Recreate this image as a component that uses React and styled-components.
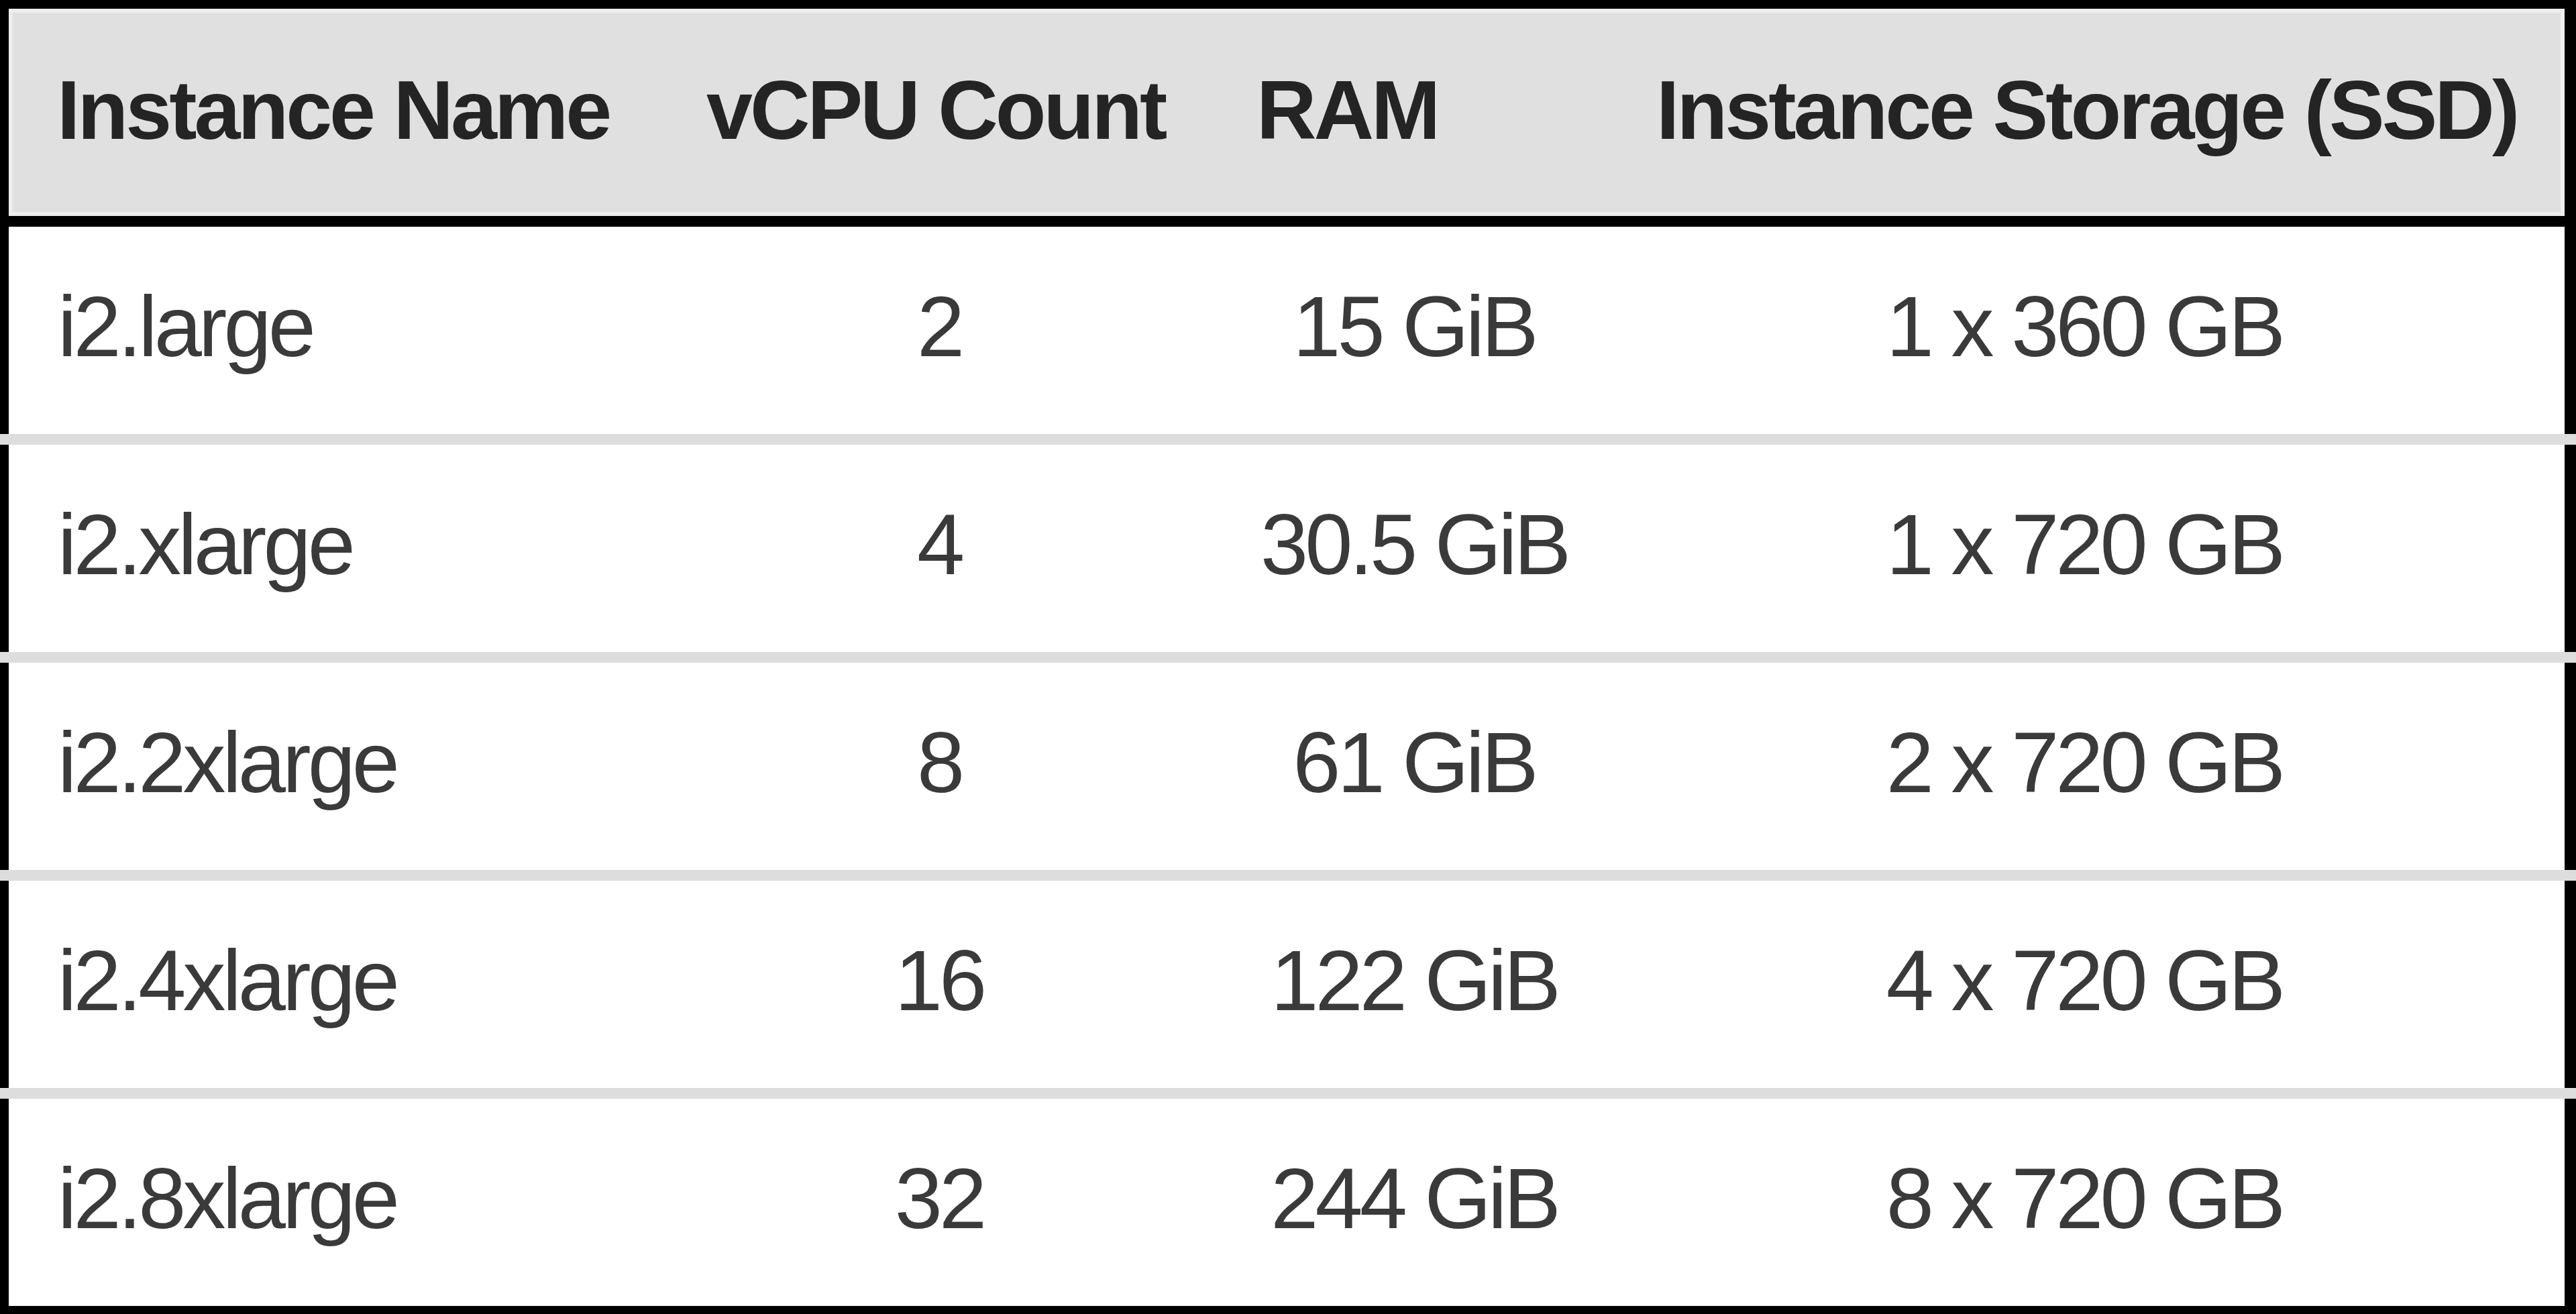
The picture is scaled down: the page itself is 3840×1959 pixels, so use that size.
import React from "react";
import styled, { createGlobalStyle } from "styled-components";

const GlobalStyle = createGlobalStyle`
  html, body {
    margin: 0;
    padding: 0;
    background: #ffffff;
  }
  body {
    font-family: "Liberation Sans", Arial, Helvetica, sans-serif;
  }
`;

const COLUMNS = "980px 820px 596px 1402px";

const instances = [
  { name: "i2.large", vcpu: "2", ram: "15 GiB", storage: "1 x 360 GB" },
  { name: "i2.xlarge", vcpu: "4", ram: "30.5 GiB", storage: "1 x 720 GB" },
  { name: "i2.2xlarge", vcpu: "8", ram: "61 GiB", storage: "2 x 720 GB" },
  { name: "i2.4xlarge", vcpu: "16", ram: "122 GiB", storage: "4 x 720 GB" },
  { name: "i2.8xlarge", vcpu: "32", ram: "244 GiB", storage: "8 x 720 GB" },
];

const Table = styled.div`
  width: 3840px;
  box-sizing: border-box;
  border-top: 13px solid #000;
  border-bottom: 12px solid #000;
  display: flex;
  flex-direction: column;
`;

const HeadRow = styled.div`
  border-left: 13px solid #000;
  border-right: 17px solid #000;
`;

const HeadBand = styled.div`
  height: 309px;
  box-sizing: border-box;
  border: 6px solid #eeeeee;
  background: #e0e0e0;
  display: grid;
  grid-template-columns: ${COLUMNS};
  align-items: center;
`;

const HeadCell = styled.div`
  padding-left: ${(p) => (p.$first ? "66px" : "54px")};
  padding-bottom: 8px;
  font-size: 124px;
  font-weight: 700;
  letter-spacing: -4px;
  color: #242424;
  white-space: nowrap;
`;

const HeadRule = styled.div`
  height: 16px;
  background: #000;
`;

const Row = styled.div`
  height: 309px;
  box-sizing: border-box;
  border-left: 13px solid #000;
  border-right: 17px solid #000;
  padding: 0 6px 12px;
  background: #fff;
  display: grid;
  grid-template-columns: ${COLUMNS};
  align-items: center;
`;

const Cell = styled.div`
  font-size: 128px;
  letter-spacing: -5px;
  color: #3a3a3a;
  white-space: nowrap;
  text-align: ${(p) => (p.$left ? "left" : "center")};
  padding: ${(p) => (p.$left ? "0 0 0 67px" : "0 18px 0 0")};
`;

const Separator = styled.div`
  height: 16px;
  background: #dddddd;
`;

const App = () => {
  return (
    <>
      <GlobalStyle />
      <Table>
        <HeadRow>
          <HeadBand>
            <HeadCell $first>Instance Name</HeadCell>
            <HeadCell>vCPU Count</HeadCell>
            <HeadCell>RAM</HeadCell>
            <HeadCell>Instance Storage (SSD)</HeadCell>
          </HeadBand>
        </HeadRow>
        <HeadRule />
        {instances.map((item, i) => (
          <React.Fragment key={item.name}>
            {i > 0 && <Separator />}
            <Row>
              <Cell $left>{item.name}</Cell>
              <Cell>{item.vcpu}</Cell>
              <Cell>{item.ram}</Cell>
              <Cell>{item.storage}</Cell>
            </Row>
          </React.Fragment>
        ))}
      </Table>
    </>
  );
};

export default App;
